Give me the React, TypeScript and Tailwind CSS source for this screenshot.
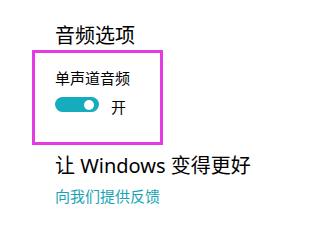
import React from 'react';

const font = { fontFamily: '"Noto Sans", "Noto Sans CJK SC", sans-serif' };

export default function App() {
  return (
    <div className="w-[326px] h-[240px] bg-white text-black overflow-hidden" style={font}>
      <div className="flex flex-col pt-[22px]">
        <h2 className="pl-[55px] text-[20px] leading-[28px] font-normal">音频选项</h2>

        {/* highlighted setting */}
        <div className="ml-[32px] w-[131px] border-[3px] border-[#e23be3] pl-[20px] pt-[15px] pb-[25px] flex flex-col">
          <span className="text-[15px] leading-[20px]">单声道音频</span>
          <div className="mt-[9px] flex items-start gap-[12px]">
            <button
              aria-label="单声道音频"
              className="w-[44px] h-[15px] rounded-full bg-[#15adbd] flex items-center justify-end pr-[5px]"
            >
              <span className="block w-[10px] h-[10px] rounded-full bg-white" />
            </button>
            <span className="text-[15px] leading-[20px]">开</span>
          </div>
        </div>

        <h2 className="pl-[55px] mt-[7px] text-[20px] leading-[28px] font-normal">让 Windows 变得更好</h2>
        <a href="#" className="pl-[55px] mt-[6px] text-[15px] leading-[20px] text-[#17a5b6]">向我们提供反馈</a>
      </div>
    </div>
  );
}
